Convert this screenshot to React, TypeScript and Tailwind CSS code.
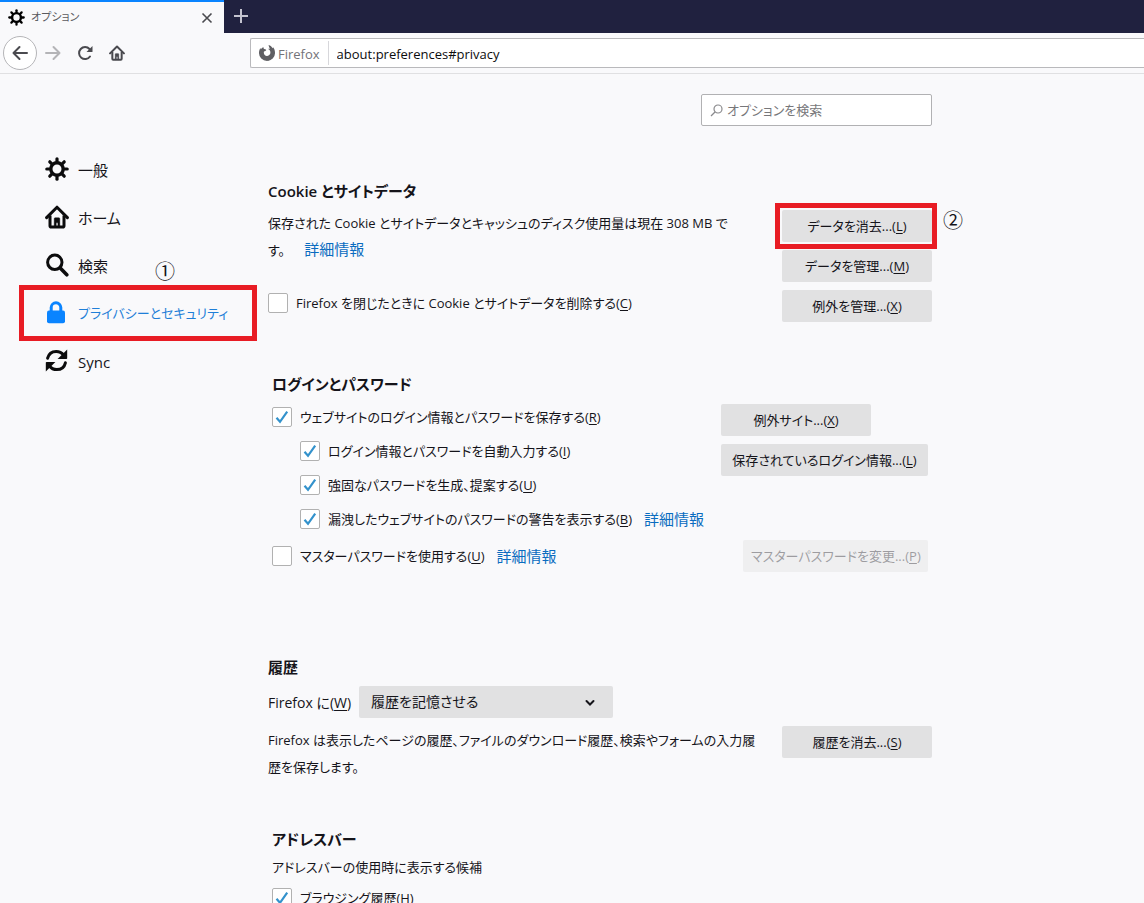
import React from "react";

type IconProps = { className?: string };

const teeth = [0, 45, 90, 135, 180, 225, 270, 315];

function GearIcon({ className }: IconProps) {
  return (
    <svg viewBox="0 0 24 24" className={className} fill="none" stroke="currentColor" aria-hidden="true">
      <circle cx="12" cy="12" r="6.2" strokeWidth="3.4" />
      {teeth.map((angle) => (
        <path key={angle} d="M12 5V1.8" strokeWidth="3.2" strokeLinecap="round" transform={`rotate(${angle} 12 12)`} />
      ))}
    </svg>
  );
}

function HomeIcon({ className }: IconProps) {
  return (
    <svg viewBox="0 0 24 24" className={className} fill="none" stroke="currentColor" aria-hidden="true">
      <path d="M1.6 12.6 12 2.2l10.4 10.4" strokeWidth="3" strokeLinecap="round" strokeLinejoin="round" />
      <path d="M5 10.5v10.2c0 .8.5 1.3 1.3 1.3h11.4c.8 0 1.3-.5 1.3-1.3V10.5" strokeWidth="3" />
      <path d="M9.2 22v-8.2c0-.7.4-1.1 1.1-1.1h3.4c.7 0 1.1.4 1.1 1.1V22h-1.9v-4.2h-1.7V22z" fill="currentColor" strokeWidth=".4" />
    </svg>
  );
}

function SearchIcon({ className }: IconProps) {
  return (
    <svg viewBox="0 0 24 24" className={className} fill="none" stroke="currentColor" strokeLinecap="round" aria-hidden="true">
      <circle cx="9.8" cy="9.3" r="7.2" strokeWidth="3" />
      <path d="m15.2 15 6.6 6.8" strokeWidth="3.6" />
    </svg>
  );
}

function LockIcon({ className }: IconProps) {
  return (
    <svg viewBox="0 0 24 24" className={className} aria-hidden="true">
      <path d="M6.2 11V6.600a4.800 4.800 0 0 1 9.600 0V11" fill="none" stroke="currentColor" strokeWidth="3" />
      <rect x="2" y="9.600" width="18" height="12.600" rx="2" fill="currentColor" />
    </svg>
  );
}

function SyncIcon({ className }: IconProps) {
  return (
    <svg viewBox="0 0 24 24" className={className} fill="none" stroke="currentColor" strokeWidth="3" aria-hidden="true">
      <path d="M2.6 9.2C3.6 5 7 2.400 11.2 2.400c3 0 5.6 1.300 7.400 3.600" strokeLinecap="round" />
      <path d="M22.200.4v8.800c0 .5-.3.800-.8.800h-8.800z" fill="currentColor" stroke="none" />
      <path d="M20.400 13.800C19.400 18 16 20.600 11.800 20.600c-3 0-5.600-1.300-7.400-3.600" strokeLinecap="round" />
      <path d="M.8 22.600v-8.800c0-.5.300-.800.800-.800h8.800z" fill="currentColor" stroke="none" />
    </svg>
  );
}

function FirefoxIcon({ className }: IconProps) {
  return (
    <svg viewBox="0 0 16 16" className={className} fill="currentColor" aria-hidden="true">
      <path d="M8 16a8 8 0 0 1-8-8.200c0-2 .6-3.600 1.400-4.900l.4 1.300C2.600 3.200 3.400 2.600 4.400 2c-.1.900.2 1.600.7 2.100 1 .1 1.700.3 2.200.9-.4.900-1.400 1.200-2.300 1.600-.7 2.400.8 4.300 2.900 4.300 2 0 3.500-1.500 3.500-3.500 0-1.700-.9-2.900-2.300-3.500.6-.2 1.200-.2 1.800 0C10.500 2.600 9.700 1.500 9.600 0c2 .7 3.200 1.800 4 3.200l.5-1c1.300 1.600 1.900 3.500 1.900 5.600A8 8 0 0 1 8 16z" />
    </svg>
  );
}

function Key({ k }: { k: string }) {
  return (
    <>
      (<span className="underline underline-offset-2">{k}</span>)
    </>
  );
}

function PushButton({ label, k, disabled, className = "" }: { label: string; k: string; disabled?: boolean; className?: string }) {
  return (
    <button
      type="button"
      disabled={disabled}
      className={`h-8 min-w-[150px] rounded-xs bg-[#e1e1e2] px-2 pt-0.5 whitespace-nowrap disabled:opacity-40 ${className}`}
    >
      {label}...<Key k={k} />
    </button>
  );
}

function MoreLink({ className = "" }: { className?: string }) {
  return (
    <a href="#more" className={`text-[15px] leading-none text-[#0a6cc0] ${className}`}>
      詳細情報
    </a>
  );
}

function Check({ id, label, k, checked, link }: { id: string; label: string; k: string; checked?: boolean; link?: boolean }) {
  return (
    <div className="flex h-[34px] items-center whitespace-nowrap">
      <span className="grid size-5 shrink-0">
        <input
          id={id}
          type="checkbox"
          defaultChecked={checked}
          className="peer col-start-1 row-start-1 size-5 appearance-none rounded-xs border border-[#b1b1b1] bg-white"
        />
        <svg
          viewBox="0 0 20 20"
          className="pointer-events-none invisible col-start-1 row-start-1 size-5 peer-checked:visible"
          fill="none"
          stroke="#3392cc"
          strokeWidth="2.200"
          aria-hidden="true"
        >
          <path d="m4.500 10.800 3.500 4L15.200 4.600" />
        </svg>
      </span>
      <label htmlFor={id} className="ml-2 pt-0.5">
        {label}
        <Key k={k} />
      </label>
      {link && <MoreLink className="ml-3" />}
    </div>
  );
}

function Heading({ children }: { children: React.ReactNode }) {
  return <h2 className="h-7 text-[15px] leading-[26px] font-semibold">{children}</h2>;
}

const categories = [
  { label: "一般", Icon: GearIcon },
  { label: "ホーム", Icon: HomeIcon },
  { label: "検索", Icon: SearchIcon },
  { label: "プライバシーとセキュリティ", Icon: LockIcon, selected: true },
  { label: "Sync", Icon: SyncIcon },
];

export default function App() {
  return (
    <div className="flex h-screen flex-col overflow-hidden bg-[#f9f9fb] font-['Open_Sans','Noto_Sans_CJK_JP',sans-serif] text-[13px] text-[#15141a] [font-feature-settings:'palt']">
      <div className="flex h-[33px] shrink-0 bg-[#20213f]">
        <div className="flex w-56 items-center border-t-2 border-[#0a84ff] bg-[#f9f9fb] pr-[9px] pl-2">
          <GearIcon className="size-[17px] text-black" />
          <span className="ml-1.5 flex-1 text-[11px] text-[#5a5a5e]">オプション</span>
          <button type="button" aria-label="タブを閉じる" className="grid size-4 place-items-center text-[#4a4a4f]">
            <svg viewBox="0 0 12 12" className="size-3" fill="none" stroke="currentColor" strokeWidth="1.600" aria-hidden="true">
              <path d="m1.500 1.500 9 9m0-9-9 9" />
            </svg>
          </button>
        </div>
        <button type="button" aria-label="新しいタブ" className="grid w-[34px] place-items-center pb-px text-[#c3c3cf]">
          <svg viewBox="0 0 14 14" className="size-3.5" fill="none" stroke="currentColor" strokeWidth="2" aria-hidden="true">
            <path d="M7 0v14M0 7h14" />
          </svg>
        </button>
      </div>

      <div className="flex h-[41px] shrink-0 items-center border-b border-[#e0e0e2] pl-[3px] text-[#4a4a4f]">
        <button type="button" aria-label="戻る" className="grid size-[34px] place-items-center rounded-full border border-[#b5b5b8] bg-white">
          <svg viewBox="0 0 16 16" className="size-4" fill="none" stroke="currentColor" strokeWidth="2" strokeLinecap="round" strokeLinejoin="round" aria-hidden="true">
            <path d="M15 8H1.500M7.500 2l-6 6 6 6" />
          </svg>
        </button>
        <button type="button" aria-label="進む" disabled className="ml-2 grid size-4 place-items-center text-[#b4b4b7]">
          <svg viewBox="0 0 16 16" className="size-4" fill="none" stroke="currentColor" strokeWidth="2" strokeLinecap="round" strokeLinejoin="round" aria-hidden="true">
            <path d="M1 8h13.500M8.500 2l6 6-6 6" />
          </svg>
        </button>
        <button type="button" aria-label="更新" className="ml-4 grid size-4 place-items-center">
          <svg viewBox="0 0 16 16" className="size-4" fill="none" stroke="currentColor" strokeWidth="2" strokeLinecap="round" aria-hidden="true">
            <path d="M13 11.500A6 6 0 1 1 12.500 4" />
            <path d="M15.500 1v5.400c0 .4-.2.600-.6.600H9.500z" fill="currentColor" stroke="none" />
          </svg>
        </button>
        <button type="button" aria-label="ホーム" className="ml-4 grid size-4 place-items-center">
          <HomeIcon className="size-4" />
        </button>
        <div className="ml-[125px] flex h-[30px] flex-1 items-center rounded-l-xs border border-r-0 border-[#b9b9bc] bg-white pl-2">
          <FirefoxIcon className="size-4 text-[#5f5f63]" />
          <span className="ml-[3px] border-r border-[#d7d7db] pt-0.5 pr-2 leading-[22px] text-[#737378]">Firefox</span>
          <input
            type="text"
            aria-label="アドレス"
            defaultValue="about:preferences#privacy"
            className="min-w-0 flex-1 bg-transparent pt-[3px] pl-2 text-[#0c0c0d] outline-none"
          />
        </div>
      </div>

      <div className="flex min-h-0 flex-1">
        <nav className="w-[268px] shrink-0 pt-[71px] pr-[15px] pl-[23px]">
          {categories.map(({ label, Icon, selected }) => (
            <div key={label} className="relative">
              <a href={`#${label}`} className="flex h-12 items-center gap-[9px] pl-[22px]">
                <Icon className={selected ? "size-6 text-[#0a84ff]" : "size-6 text-[#0c0c0d]"} />
                <span className={selected ? "pt-0.5 whitespace-nowrap text-[#1f7fd8]" : "pt-0.5 text-[15px]"}>{label}</span>
              </a>
              {selected && (
                <>
                  <span className="pointer-events-none absolute -inset-1 border-[5px] border-[#e81c24]" />
                  <span className="absolute -top-[31px] left-[132px] text-xl leading-7">①</span>
                </>
              )}
            </div>
          ))}
        </nav>

        <main className="w-[664px] max-w-full pt-5">
          <div className="ml-auto flex h-8 w-[231px] items-center rounded-xs border border-[#b1b1b3] bg-white pl-2">
            <svg viewBox="0 0 13 13" className="size-[13px] text-[#8a8a8d]" fill="none" stroke="currentColor" strokeWidth="1.200" aria-hidden="true">
              <circle cx="8" cy="5" r="4" />
              <path d="M5 8 1 12" />
            </svg>
            <input
              type="search"
              aria-label="オプションを検索"
              placeholder="オプションを検索"
              className="ml-1 min-w-0 flex-1 bg-transparent pt-0.5 outline-none placeholder:text-[#77777a]"
            />
          </div>

          <section className="mt-[52px]">
            <Heading>Cookie とサイトデータ</Heading>
            <div className="mt-1 flex justify-between">
              <div>
                <p className="leading-[27px] whitespace-nowrap">
                  保存された Cookie とサイトデータとキャッシュのディスク使用量は現在 308 MB で
                  <br />
                  す。 <MoreLink className="ml-4" />
                </p>
                <div className="mt-[22px]">
                  <Check id="clear-on-close" label="Firefox を閉じたときに Cookie とサイトデータを削除する" k="C" />
                </div>
              </div>
              <div className="flex flex-col gap-2">
                <div className="relative flex">
                  <PushButton label="データを消去" k="L" />
                  <span className="pointer-events-none absolute -inset-y-[7px] -right-[5px] -left-[7px] border-[5px] border-[#e81c24]" />
                  <span className="absolute -top-[3px] left-[161px] text-xl leading-7">②</span>
                </div>
                <PushButton label="データを管理" k="M" />
                <PushButton label="例外を管理" k="X" />
              </div>
            </div>
          </section>

          <section className="mt-[49px] px-1">
            <Heading>ログインとパスワード</Heading>
            <div className="mt-px flex">
              <div className="w-[449px]">
                <Check id="save-logins" label="ウェブサイトのログイン情報とパスワードを保存する" k="R" checked />
                <div className="pl-7">
                  <Check id="autofill" label="ログイン情報とパスワードを自動入力する" k="I" checked />
                  <Check id="generate" label="強固なパスワードを生成、提案する" k="U" checked />
                  <Check id="breach" label="漏洩したウェブサイトのパスワードの警告を表示する" k="B" checked link />
                </div>
              </div>
              <div className="flex flex-1 flex-col items-start gap-2 pt-1">
                <PushButton label="例外サイト" k="X" />
                <PushButton label="保存されているログイン情報" k="L" className="w-full" />
              </div>
            </div>
            <div className="mt-[3px] flex items-center justify-between">
              <Check id="master" label="マスターパスワードを使用する" k="U" link />
              <PushButton label="マスターパスワードを変更" k="P" disabled className="w-[185px]" />
            </div>
          </section>

          <section className="mt-[81px]">
            <Heading>履歴</Heading>
            <div className="mt-1 flex items-center text-sm">
              <label htmlFor="history-mode" className="w-[91px] pt-0.5 whitespace-nowrap">
                Firefox に<Key k="W" />
              </label>
              <div className="relative w-[254px]">
                <select id="history-mode" className="h-8 w-full appearance-none rounded-xs bg-[#e1e1e2] px-3">
                  <option>履歴を記憶させる</option>
                </select>
                <svg viewBox="0 0 10 10" className="pointer-events-none absolute top-3 right-[18px] size-2.5" fill="none" stroke="currentColor" strokeWidth="2" strokeLinecap="round" aria-hidden="true">
                  <path d="m1.500 3 3.500 3.500L8.500 3" />
                </svg>
              </div>
            </div>
            <div className="mt-2 flex items-start justify-between">
              <p className="pt-px leading-[27px] whitespace-nowrap">
                Firefox は表示したページの履歴、ファイルのダウンロード履歴、検索やフォームの入力履
                <br />
                歴を保存します。
              </p>
              <PushButton label="履歴を消去" k="S" />
            </div>
          </section>

          <section className="mt-[45px] px-1">
            <Heading>アドレスバー</Heading>
            <p className="leading-[27px]">アドレスバーの使用時に表示する候補</p>
            <Check id="suggest-history" label="ブラウジング履歴" k="H" checked />
          </section>
        </main>
      </div>
    </div>
  );
}
